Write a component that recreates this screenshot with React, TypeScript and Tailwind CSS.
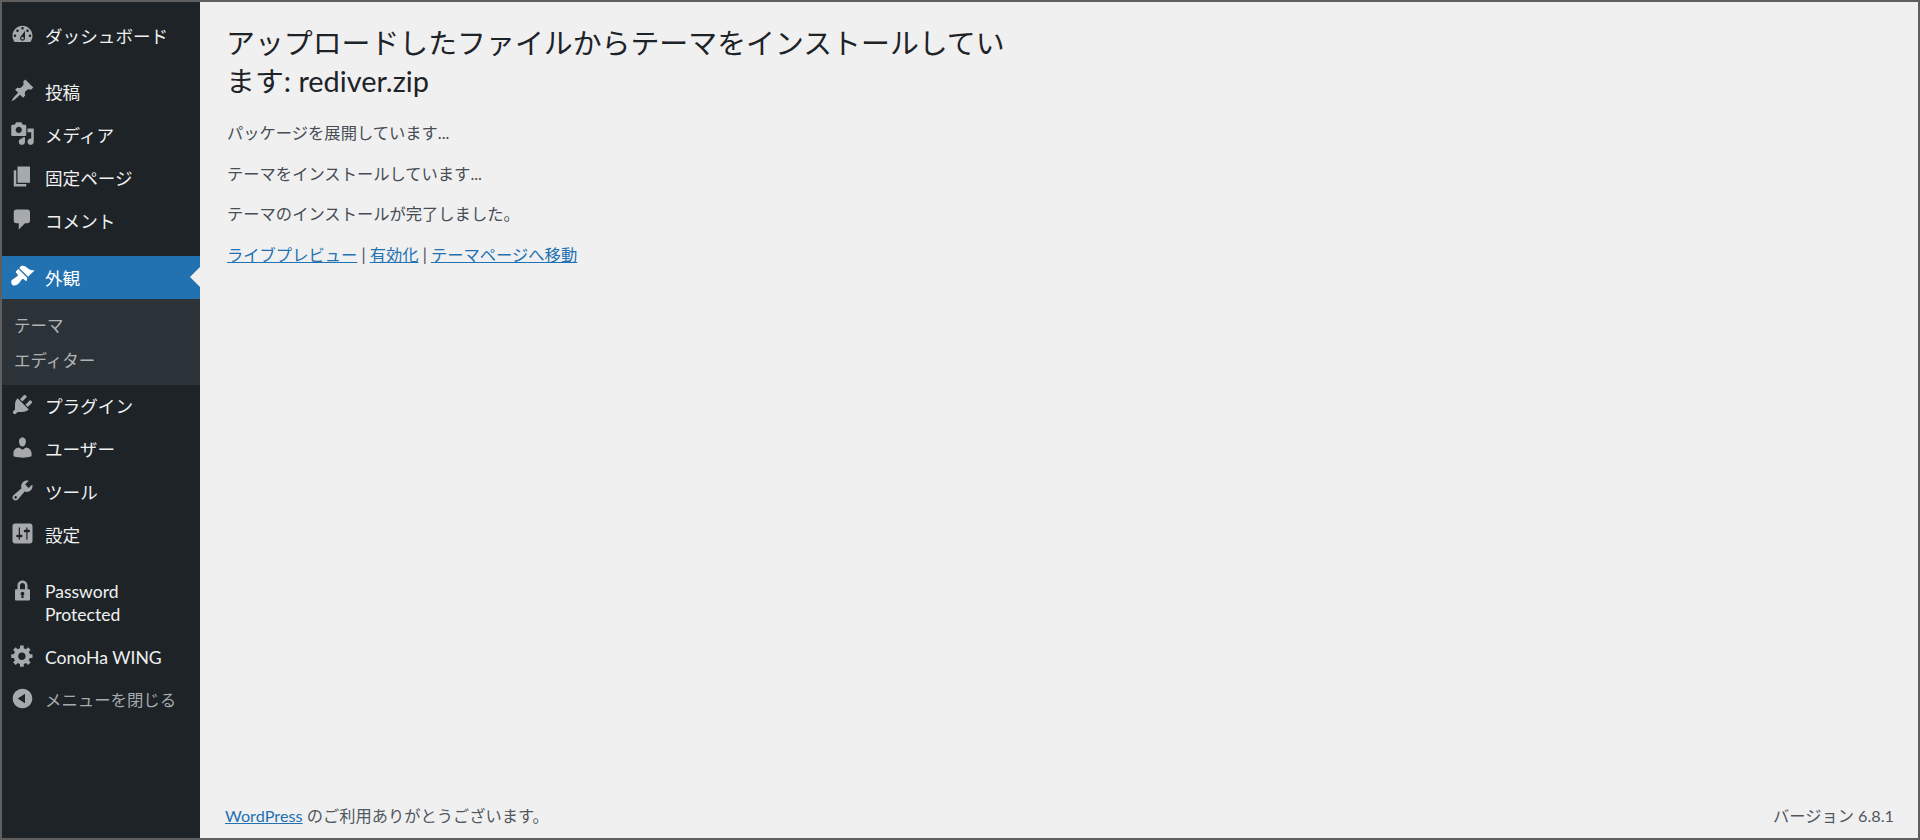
import React from "react";

const icons = {
  dashboard:
    "M3.76 16h12.48c1.1-1.37 1.76-3.11 1.76-5 0-4.42-3.58-8-8-8s-8 3.58-8 8c0 1.89.66 3.63 1.76 5zM10 4c.55 0 1 .45 1 1s-.45 1-1 1-1-.45-1-1 .45-1 1-1zM6 6c.55 0 1 .45 1 1s-.45 1-1 1-1-.45-1-1 .45-1 1-1zm8 0c.55 0 1 .45 1 1s-.45 1-1 1-1-.45-1-1 .45-1 1-1zm-5.37 5.55L12 7v6c0 1.1-.9 2-2 2s-2-.9-2-2c0-.57.24-1.08.63-1.45zM4 10c.55 0 1 .45 1 1s-.45 1-1 1-1-.45-1-1 .45-1 1-1zm12 0c.55 0 1 .45 1 1s-.45 1-1 1-1-.45-1-1 .45-1 1-1zm-5 3c0-.55-.45-1-1-1s-1 .45-1 1 .45 1 1 1 1-.45 1-1z",
  post: "M10.44 3.02l1.82-1.82 6.36 6.35-1.83 1.82c-1.05-.68-2.48-.57-3.41.36l-.75.75c-.92.93-1.04 2.35-.35 3.41l-1.83 1.82-2.41-2.41-2.8 2.79c-.42.42-3.38 2.71-3.8 2.29s1.86-3.39 2.28-3.81l2.79-2.79L4.1 9.36l1.83-1.82c1.05.69 2.48.57 3.4-.36l.75-.75c.93-.92 1.05-2.35.36-3.41z",
  media:
    "M13 11V4c0-.55-.45-1-1-1h-1.67L9 1H5L3.67 3H2c-.55 0-1 .45-1 1v7c0 .55.45 1 1 1h10c.55 0 1-.45 1-1zM7 4.5c1.38 0 2.5 1.12 2.5 2.5S8.38 9.5 7 9.5 4.5 8.38 4.5 7 5.62 4.5 7 4.5zM14 6h5v10.5c0 1.38-1.12 2.5-2.5 2.5S14 17.88 14 16.5s1.12-2.5 2.5-2.5c.17 0 .34.02.5.05V9h-3V6zm-4 8.05V13h2v3.5c0 1.38-1.12 2.5-2.5 2.5S7 17.88 7 16.5 8.12 14 9.5 14c.17 0 .34.02.5.05z",
  page: "M6 15V2h10v13H6zm-1 1h8v2H3V5h2v11z",
  comments:
    "M5 2h9c1.1 0 2 .9 2 2v7c0 1.1-.9 2-2 2h-2l-5 5v-5H5c-1.1 0-2-.9-2-2V4c0-1.1.9-2 2-2z",
  appearance:
    "M14.48 11.06L7.41 3.99l1.5-1.5c.5-.56 2.3-.47 3.51.32 1.21.8 1.43 1.28 2.91 2.1 1.18.64 2.45 1.26 4.45.85zm-.71.71L6.7 4.7 4.93 6.47c-.39.39-.39 1.02 0 1.41l1.06 1.06c.39.39.39 1.03 0 1.42-.6.6-1.43 1.11-2.21 1.69-.35.26-.7.53-1.01.84C1.43 13.23 1 14.08 1 15.5 1 16.88 2.12 18 3.5 18c1.42 0 2.27-.43 3.61-1.77.31-.31.58-.66.84-1.01.58-.78 1.09-1.61 1.69-2.21.39-.39 1.03-.39 1.42 0l1.06 1.06c.39.39 1.02.39 1.41 0z",
  plugins:
    "M13.11 4.36L9.87 7.6 8 5.73l3.24-3.24c.35-.34 1.05-.2 1.56.32.52.51.66 1.21.31 1.55zm-8 1.77l.91-1.12 9.01 9.01-1.19.84c-.71.71-2.63 1.16-3.82 1.16H6.14L4.9 17.26c-.59.59-1.54.59-2.12 0-.59-.58-.59-1.53 0-2.12l1.24-1.24v-3.88c0-1.13.4-3.19 1.09-3.89zm7.26 3.97l3.24-3.24c.34-.35 1.04-.21 1.55.31.52.51.66 1.21.31 1.55l-3.24 3.25z",
  users:
    "M10 9.25c-2.27 0-2.73-3.44-2.73-3.44C7 4.02 7.82 2 9.97 2c2.16 0 2.98 2.02 2.71 3.81 0 0-.41 3.44-2.68 3.44zm0 2.57L12.72 10c2.39 0 4.52 2.33 4.52 4.53v2.49s-3.65 1.13-7.24 1.13c-3.65 0-7.24-1.13-7.24-1.13v-2.49c0-2.25 1.94-4.48 4.47-4.48z",
  tools:
    "M16.68 9.77c-1.34 1.34-3.3 1.67-4.95.99l-5.41 6.52c-.99.99-2.59.99-3.58 0s-.99-2.59 0-3.57l6.52-5.42c-.68-1.65-.35-3.61.99-4.95 1.28-1.28 3.12-1.62 4.72-1.06l-2.89 2.89 2.82 2.82 2.86-2.87c.53 1.58.18 3.39-1.08 4.65zM3.81 16.21c.4.39 1.04.39 1.43 0 .4-.4.4-1.04 0-1.43-.39-.4-1.03-.4-1.43 0-.39.39-.39 1.03 0 1.43z",
  settings:
    "M18 16V4c0-1.1-.9-2-2-2H4c-1.1 0-2 .9-2 2v12c0 1.1.9 2 2 2h12c1.1 0 2-.9 2-2zM8 11h1c.55 0 1 .45 1 1s-.45 1-1 1H8v1.5c0 .28-.22.5-.5.5s-.5-.22-.5-.5V13H6c-.55 0-1-.45-1-1s.45-1 1-1h1V5.5c0-.28.22-.5.5-.5s.5.22.5.5V11zm5-2h-1c-.55 0-1-.45-1-1s.45-1 1-1h1V5.5c0-.28.22-.5.5-.5s.5.22.5.5V7h1c.55 0 1 .45 1 1s-.45 1-1 1h-1v5.5c0 .28-.22.5-.5.5s-.5-.22-.5-.5V9z",
  lock: "M14 9h1c.55 0 1 .45 1 1v7c0 .55-.45 1-1 1H5c-.55 0-1-.45-1-1v-7c0-.55.45-1 1-1h1V6c0-2.21 1.79-4 4-4s4 1.79 4 4v3zm-2 0V6c0-1.1-.9-2-2-2s-2 .9-2 2v3h4zm-1 7l-.36-2.15c.51-.24.86-.75.86-1.35 0-.83-.67-1.5-1.5-1.5s-1.5.67-1.5 1.5c0 .6.35 1.11.86 1.35L9 16h2z",
  gear: "M18 12h-2.18c-.17.7-.44 1.35-.81 1.93l1.54 1.54-2.1 2.1-1.54-1.54c-.58.36-1.23.63-1.91.79V19H8v-2.18c-.68-.16-1.33-.43-1.91-.79l-1.54 1.54-2.12-2.12 1.54-1.54c-.36-.58-.63-1.23-.79-1.91H1V9.03h2.17c.16-.7.44-1.35.8-1.94L2.43 5.55l2.1-2.1 1.54 1.54c.58-.37 1.24-.64 1.93-.81V2h3v2.18c.68.16 1.33.43 1.91.79l1.54-1.54 2.12 2.12-1.54 1.54c.36.59.64 1.24.8 1.94H18V12zm-8.5 1.5c1.66 0 3-1.34 3-3s-1.34-3-3-3-3 1.34-3 3 1.34 3 3 3z",
  collapse:
    "M10 2.16c4.33 0 7.84 3.51 7.84 7.84s-3.51 7.84-7.84 7.84S2.16 14.33 2.16 10 5.71 2.16 10 2.16zm2 11.72V6.12L6.18 9.97z",
};

const Icon = ({ d, className }: { d: string; className: string }) => (
  <svg viewBox="0 0 20 20" className={`h-[25px] w-[25px] shrink-0 fill-current ${className}`}>
    <path d={d} />
  </svg>
);

const MenuItem = ({ icon, label }: { icon: string; label: string }) => (
  <li className="flex h-[43px] items-center pl-[8px] text-[17.6px] leading-[23px] text-[#f0f0f1]">
    <Icon d={icon} className="mb-[4px] text-[#a7aaad]" />
    <span className="ml-[10px]">{label}</span>
  </li>
);

export default function App() {
  return (
    <div className="flex h-[840px] w-[1920px] overflow-hidden border-2 border-[#5f5f5f] bg-[#f0f0f1] font-['Lato','Noto_Sans_CJK_JP',sans-serif]">
      <aside className="w-[198px] shrink-0 bg-[#1d2327]">
        <ul className="pt-[13px]">
          <MenuItem icon={icons.dashboard} label="ダッシュボード" />
        </ul>
        <ul className="mt-[13px]">
          <MenuItem icon={icons.post} label="投稿" />
          <MenuItem icon={icons.media} label="メディア" />
          <MenuItem icon={icons.page} label="固定ページ" />
          <MenuItem icon={icons.comments} label="コメント" />
        </ul>
        <div className="relative mt-[13px] flex h-[43px] items-center bg-[#2271b1] pl-[8px] text-[17.6px] text-white">
          <Icon d={icons.appearance} className="mb-[4px] text-white" />
          <span className="ml-[10px] pt-[3px]">外観</span>
          <span className="absolute right-0 top-[11px] h-0 w-0 border-y-[10px] border-r-[10px] border-y-transparent border-r-[#f0f0f1]" />
        </div>
        <ul className="flex h-[86px] flex-col justify-center gap-[12px] bg-[#2c3338] pl-[12px] pt-[3px] text-[16.5px] leading-[23px] text-[#b0b3b6]">
          <li>テーマ</li>
          <li>エディター</li>
        </ul>
        <ul>
          <MenuItem icon={icons.plugins} label="プラグイン" />
          <MenuItem icon={icons.users} label="ユーザー" />
          <MenuItem icon={icons.tools} label="ツール" />
          <MenuItem icon={icons.settings} label="設定" />
        </ul>
        <ul className="mt-[12px]">
          <li className="flex items-start pb-[10px] pl-[8px] pt-[11px] text-[17.5px] leading-[23px] text-[#f0f0f1]">
            <Icon d={icons.lock} className="-mt-[2px] text-[#a7aaad]" />
            <span className="ml-[10px]">
              Password
              <br />
              Protected
            </span>
          </li>
          <MenuItem icon={icons.gear} label="ConoHa WING" />
          <li className="flex h-[43px] items-center pl-[8px] text-[16.4px] text-[#a7aaad]">
            <Icon d={icons.collapse} className="mb-[4px] text-[#a7aaad]" />
            <span className="ml-[10px]">メニューを閉じる</span>
          </li>
        </ul>
      </aside>
      <main className="flex min-w-0 flex-1 flex-col">
        <div className="pl-[27px] pt-[22px] text-[16.3px] leading-[24.4px] text-[#464d54]">
          <h1 className="-ml-[1px] mb-[21px] max-w-[790px] text-[28.9px] font-normal leading-[38px] text-[#1d2327]">
            アップロードしたファイルからテーマをインストールしています: rediver.zip
          </h1>
          <p className="mb-[16.25px]">パッケージを展開しています...</p>
          <p className="mb-[16.25px]">テーマをインストールしています...</p>
          <p className="mb-[16.25px]">テーマのインストールが完了しました。</p>
          <p>
            <a className="text-[#2271b1] underline">ライブプレビュー</a> |{" "}
            <a className="text-[#2271b1] underline">有効化</a> |{" "}
            <a className="text-[#2271b1] underline">テーマページへ移動</a>
          </p>
        </div>
        <footer className="mt-auto flex justify-between pb-[10px] pl-[25px] pr-[24px] text-[16.25px] leading-[24px] text-[#50575e]">
          <p>
            <a className="text-[#2271b1] underline">WordPress</a> のご利用ありがとうございます。
          </p>
          <p>バージョン 6.8.1</p>
        </footer>
      </main>
    </div>
  );
}
